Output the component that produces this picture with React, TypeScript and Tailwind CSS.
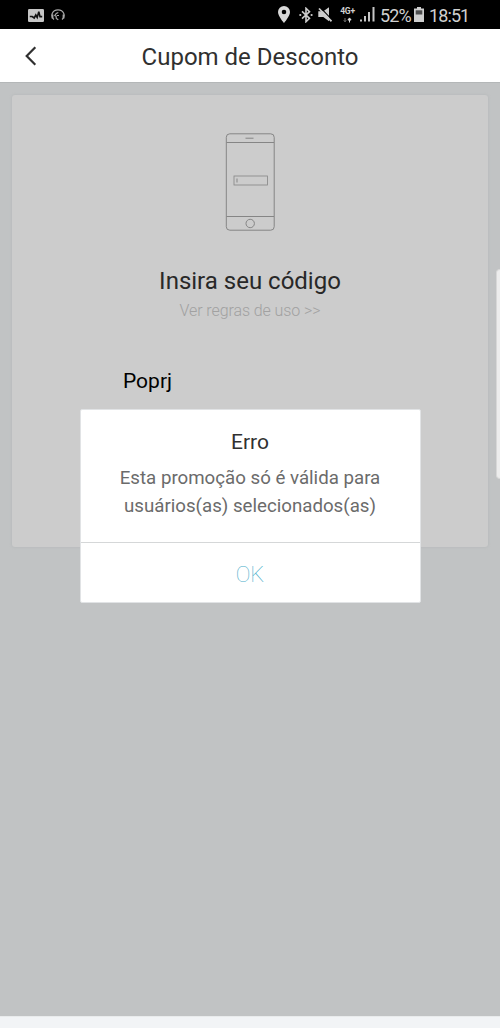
import React from "react";

function StatusBar() {
  return (
    <div className="flex h-[29px] shrink-0 items-center justify-between bg-black pl-7 pr-[31px] text-[#d0d0d0]">
      <div className="flex items-center gap-[7px] pt-px">
        <svg width="16" height="13" viewBox="0 0 16 13">
          <rect width="16" height="13" rx="1.2" fill="#c6c6c6" />
          <path d="M1.800 7.500h2.400l2 1.500 1.600-3 1.400 2.500L10.800 2.600l1.200 5h2.200" fill="none" stroke="#111" strokeWidth="1.600" />
        </svg>
        <svg width="14" height="13" viewBox="0 0 14 13" fill="none" stroke="#a8a8a8" strokeWidth="1.200">
          <path d="M3 10.500C-1 7 1.200.8 7 .8s8 6.200 4 9.700" />
          <path d="M1.500 5.500v4M12.500 5.500v4" strokeWidth="1.800" />
          <path d="M7.300 3.500 5.300 4.500 3.800 6.500l1.300.6.2 2.300 2 1.400M6 6.500h2" />
        </svg>
      </div>
      <div className="flex items-center">
        <svg width="12" height="17" viewBox="0 0 12 17" className="mr-[9px]">
          <path fillRule="evenodd" d="M6 0a6 6 0 0 0-6 6c0 4.200 6 11 6 11s6-6.800 6-11a6 6 0 0 0-6-6Zm0 3.700a2.300 2.300 0 1 1 0 4.600 2.300 2.300 0 0 1 0-4.600Z" fill="#d8d8d8" />
        </svg>
        <svg width="14" height="16" viewBox="0 0 14 16" className="mr-[5px]">
          <path d="m3 4.300 7.500 7L7 14.700V1.300l3.500 3.400-7.500 7" fill="none" stroke="#ccc" strokeWidth="1.600" />
          <circle cx="1.300" cy="8" r="1.100" fill="#ccc" />
          <circle cx="12.600" cy="8" r="1.100" fill="#ccc" />
        </svg>
        <svg width="14" height="15" viewBox="0 0 14 15" className="mr-[8px]">
          <path d="M.3 4.300h5L11 .3v14l-5.700-4.200h-5Z" fill="#cecece" />
          <path d="m2.100.3 12 12.600" stroke="#000" strokeWidth="1.200" />
          <path d="m1 1.500 12.500 12.800" stroke="#cecece" strokeWidth="1.700" />
        </svg>
        <div className="mr-[5px] flex w-[15px] flex-col items-center">
          <span className="text-[8.500px] font-bold leading-[9px] tracking-[-0.200px]">4G+</span>
          <svg width="11" height="6" viewBox="0 0 11 6" className="mt-px">
            <path d="M3 1v3.500M1.800 3.300 3 4.800l1.200-1.500" fill="none" stroke="#777" />
            <path d="M7.500 3v2.500M5.900 3 7.500.9 9.100 3Z" fill="#ddd" stroke="#ddd" />
          </svg>
        </div>
        <svg width="15" height="15" viewBox="0 0 15 15" className="mr-[5px]" fill="#c6c6c6">
          <rect x="0" y="12.500" width="2" height="2" />
          <rect x="4" y="9" width="2" height="5.500" />
          <rect x="8" y="5" width="2" height="9.500" />
          <rect x="12.500" y="0" width="2" height="14.500" />
        </svg>
        <span className="w-[30px] whitespace-nowrap pt-[2px] text-[18px] leading-5 tracking-[-0.900px]">52%</span>
        <svg width="10" height="15" viewBox="0 0 10 15" className="ml-[4px] mr-[5px]">
          <path d="M3 0h4v1.500h3V15H0V1.500h3Z" fill="#cecece" />
          <rect x="1.700" y="3.300" width="6.600" height="4.200" fill="#4d4d4d" />
        </svg>
        <span className="w-[40px] whitespace-nowrap pt-[2px] text-[18px] leading-5 tracking-[-0.900px]">18:51</span>
      </div>
    </div>
  );
}

function Header() {
  return (
    <header className="grid h-[53px] shrink-0 grid-cols-[64px_1fr_64px] items-center bg-white">
      <button aria-label="Voltar" className="pl-[25px]">
        <svg width="12" height="20" viewBox="0 0 12 20" fill="none" stroke="#303030" strokeWidth="2.200">
          <path d="M10.300 1.300 1.700 10l8.600 8.700" />
        </svg>
      </button>
      <h1 className="pt-[3px] text-center text-[24px] leading-7 text-[#303030]">Cupom de Desconto</h1>
    </header>
  );
}

function PhoneDrawing() {
  return (
    <svg width="50" height="98" viewBox="0 0 50 98" fill="none" stroke="#858585" strokeWidth="1">
      <rect x="1.300" y=".8" width="47.900" height="96.400" rx="3.500" />
      <path d="M1.500 9.500h47.500M1.500 83.500h47.500" />
      <path d="M20.500 5.200h8" />
      <rect x="9" y="43" width="33.500" height="9" strokeWidth=".8" />
      <path d="M12 45.500v4" />
      <circle cx="25.200" cy="90.500" r="4.200" />
    </svg>
  );
}

function ErrorDialog() {
  return (
    <div role="dialog" className="absolute left-20 top-[326px] flex h-[194px] w-[341px] flex-col rounded-[2px] border border-[#e1e3e5] bg-white text-center">
      <div className="h-[133px] border-b border-[#d5d7d8] pt-[18px]">
        <h3 className="pr-px text-[21px] leading-7 text-[#303030]">Erro</h3>
        <p className="mt-2 whitespace-nowrap pr-px text-[18.700px] leading-7 text-[#6b6b6b]">
          Esta promoção só é válida para
          <br />
          usuários(as) selecionados(as)
        </p>
      </div>
      <button className="flex-1 pr-px pt-1 text-[22px] font-thin leading-7 text-[#48aeca]">OK</button>
    </div>
  );
}

export default function App() {
  return (
    <div className="flex h-[1028px] w-[500px] flex-col overflow-hidden bg-[#f2f4f6] font-['Roboto',sans-serif]">
      <StatusBar />
      <Header />
      <main className="relative h-[934px] shrink-0 border-t border-[#b4b7b8] bg-[#c1c3c4] px-3 pt-3">
        <section className="flex h-[452px] flex-col items-center rounded-[3px] bg-[#cccccc] pt-[38px] shadow-[0_0_3px_#b2b6b8]">
          <PhoneDrawing />
          <h2 className="mt-9 text-[24px] leading-7 text-[#282828]">Insira seu código</h2>
          <p className="mt-1 text-[16px] font-light leading-6 tracking-[-0.080px] text-[#a1a1a1]">Ver regras de uso &gt;&gt;</p>
          <div className="mt-[44px] w-[254px] text-[21px] leading-7 text-black">Poprj</div>
        </section>
        <ErrorDialog />
        <div className="absolute right-0 top-[186px] h-[210px] w-1 rounded-l-[4px] border border-r-0 border-[#d8d8d8] bg-[#ededed]" />
      </main>
      <div className="h-3 shrink-0 border-t border-[#e9ebec] bg-[#f2f4f6]" />
    </div>
  );
}
